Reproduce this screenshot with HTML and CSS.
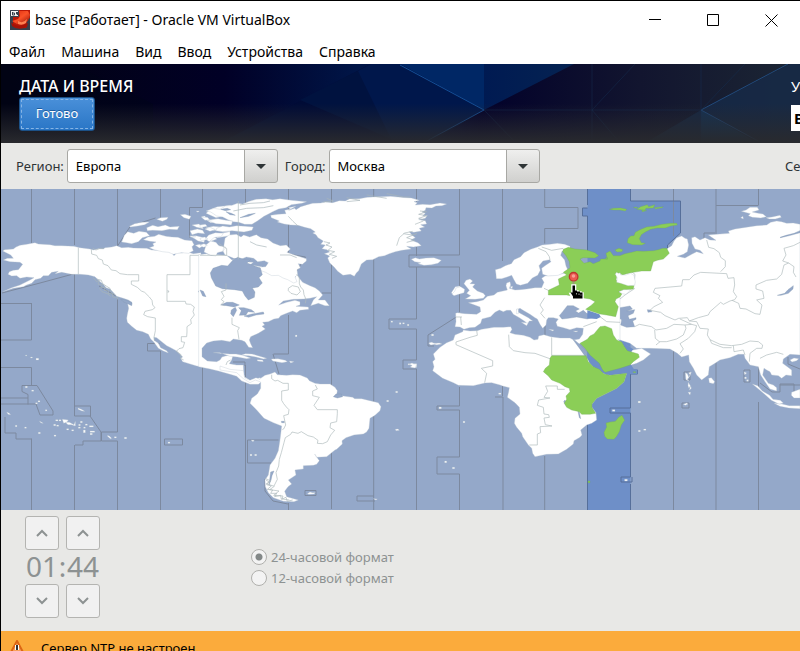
FILE: index.html
```html
<!DOCTYPE html>
<html lang="ru">
<head>
<meta charset="utf-8">
<title>base [Работает] - Oracle VM VirtualBox</title>
<link rel="stylesheet" href="styles.css">
</head>
<body>
<div class="window">
  <header class="titlebar">
    <svg class="app-icon" viewBox="0 0 20 20" aria-hidden="true">
      <defs>
        <linearGradient id="ball" x1="0" y1="0" x2="1" y2="1"><stop offset="0" stop-color="#d92b0c"/><stop offset=".5" stop-color="#fa5228"/><stop offset="1" stop-color="#961004"/></linearGradient>
      </defs>
      <path fill="#b81707" d="M0 0h20v20H0z"/>
      <path fill="#37404c" d="M0 0h3v16l6 2h11v2H0zM17 10l3-2v11h-4z"/>
      <path fill="url(#ball)" d="M9 1h9l2 4-2 6-4 3H7L2 11l6-2 2-3z"/>
      <path fill="#ff8152" d="M8 11q5 3 9-2l-1 4q-4 3-8 1z"/>
      <path fill="#a51206" d="M1 12q7 7 17 1l-1 4q-9 4-15-1z"/>
      <path fill="#f5f5f5" stroke="#39414e" d="M.5.5h8v6h-8z"/>
      <path stroke="#39414e" d="M2.500 2v3h2v-2h-2M6.500 2v2h1v-2v3" fill="none"/>
    </svg>
    <h1 class="caption">base [Работает] - Oracle VM VirtualBox</h1>
    <div class="controls">
      <button class="control" aria-label="Свернуть"><svg viewBox="0 0 13 13"><path d="M0 5.500h12"/></svg></button>
      <button class="control" aria-label="Развернуть"><svg viewBox="0 0 13 13"><path d="M.5.5h11v11H.5z"/></svg></button>
      <button class="control" aria-label="Закрыть"><svg viewBox="0 0 13 13"><path d="M.5.5l12 12M12.500.5l-12 12"/></svg></button>
    </div>
  </header>
  <nav class="menubar">
    <a href="#">Файл</a><a href="#">Машина</a><a href="#">Вид</a><a href="#">Ввод</a><a href="#">Устройства</a><a href="#">Справка</a>
  </nav>
  <main class="screen">
    <section class="banner">
      <svg class="banner-art" viewBox="1 64 799 79" preserveAspectRatio="none" aria-hidden="true">
        <defs>
          <linearGradient id="night"><stop offset="0" stop-color="#020310"/><stop offset=".28" stop-color="#010026"/><stop offset=".45" stop-color="#001648"/><stop offset=".6" stop-color="#02012a"/><stop offset=".8" stop-color="#12152f"/><stop offset="1" stop-color="#1c2634"/></linearGradient>
          <linearGradient id="fade" x2="0" y2="1"><stop offset=".5" stop-color="#292a2e" stop-opacity="0"/><stop offset="1" stop-color="#292a2e"/></linearGradient>
          <linearGradient id="facet"><stop offset="0" stop-color="#001a52"/><stop offset="1" stop-color="#052352"/></linearGradient>
        </defs>
        <path fill="url(#night)" d="M1 64h799v79H1z"/>
        <path fill="#000317" d="M1 64l72 0 80 40v39H1z" opacity=".5"/>
        <path fill="#000b36" d="M371 64L220 143h210l54-33-84-46z"/>
        <path fill="#00123f" d="M371 64L300 100l100 43h22l62-33-84-46z"/>
        <path fill="#00174b" d="M371 64l-13 7 35 72h29l62-33-84-46z"/>
        <path fill="#002765" d="M400 64h84v46z"/>
        <path fill="url(#facet)" d="M484 64h90l-90 46z"/>
        <path fill="#172a49" d="M790 64h10v79H645l56-33z" opacity=".8"/>
        <path fill="#153a61" d="M701 110v33h57z" opacity=".6"/>
        <g fill="none" stroke="#144e96">
          <path d="M400 65l84 45-61 33"/>
          <path d="M788 64l-87 46 57 31" stroke="#214a7c"/>
          <path d="M592 64v79M635 64l-43 46 28 33M701 64v79M745 64l-44 46M484 110h217M484 110l32 33" stroke="#173054" opacity=".45"/>
        </g>
        <path fill="url(#fade)" d="M1 64h799v79H1z"/>
      </svg>
      <div class="banner-main">
        <h2 class="banner-title">ДАТА И ВРЕМЯ</h2>
        <button class="done"><span>Готово</span></button>
      </div>
      <div class="banner-side"><span>У</span><b class="layout">В</b></div>
    </section>

    <form class="location">
      <label for="region">Регион:</label>
      <span class="combo"><select id="region"><option>Европа</option></select><svg class="arrow" viewBox="0 0 10 5"><path d="M0 0h10L5 5z"/></svg></span>
      <label for="city">Город:</label>
      <span class="combo"><select id="city"><option>Москва</option></select><svg class="arrow" viewBox="0 0 10 5"><path d="M0 0h10L5 5z"/></svg></span>
      <span class="network">Се</span>
    </form>

    <svg class="map" viewBox="1 189 799 321" role="img" aria-label="Карта часовых поясов">
      <path class="sea" d="M1 189h799v321H1z"/>
      <!-- selected zone -->
      <path class="zone" d="M587.500 189h43v12h50v32l-13 12v8l-37 60v197h-43V216h-5v-8h5z"/>
      <!-- zone limits -->
      <g class="limit">
        <path d="M31.500 189v54M31.500 303v37H1M1 303.500h30.500M1 367.500h30.500v18M31.500 438.500V510M1 398h27M1 404h36M74.500 189v56M74.500 274v142M74.500 445v65M117.500 189v57l13-20 25-8M117.500 299v133h-16v9h16v69M101 432v9h-18v4h-8M101 432l-11-16M74.500 406h16v10h-16M160.500 189v29M160.500 351v159M147.500 343.500h12M147.500 343.500v7.500h13M202.500 189v18.500h-13v30M202.500 365v145M245.500 189v20M245.500 365v145M288.500 189v65l17 3-9 14v19M288.500 315v39h-15M288.500 503v7M331.500 189v320M373.700 189v321M416.500 189v13M416.500 247v9M416.500 267v52H389v10h27.500v31H403v9h13.500v141"/>
        <path d="M459.500 189v66H409v12h50.500v50M459.500 387v19H437v4h22.500v47H437v17h22.500v36M459.500 315L428 335v11h6M502.500 189v72M502.500 386v10M495 397h8v113M544.700 189v18.500H578v21h-33.300v15M544.700 456v54M545 324v13M673.500 189v47M673.500 349v161M716 189v45M716 360v150M716 205.500h42.500M758.500 189v16M758.500 366v23M758.500 402v108M704 240v-7h11"/>
        <path d="M5 417v16h11v6h15.500M37 385.500H22v6l6 3v10M37 385.500l16 25.500v4H40l-4-11M164.500 439h18v6h-18zM247.500 440h31M247.500 440v23H271M305 490.500h11v5h-11zM374 496h-17v5h18M2 293l38-10 37-10M684 372h6v8h-6zM682 403h7v5h-7zM744 370h6v12h-6zM760 383l12 9h8v-8h14v10h6M788 357v7l12 5M780 385h20M273 354l6 20M245 366v-4h-12M322 293h9M99 286l17 10M265 479v12l8 10 15 3"/>
        <path class="edge" d="M587.500 189v16M587.500 208h-5v8h5v36M587.500 416v94M630.500 189v12h50v32l-13 12v8M630.500 372v36H610v5h20.500v64H621v5h11v-5M630.500 484v26M630.500 370h7v4h-7"/>
      </g>

      <!-- western North America -->
      <g class="land" transform="translate(0 185) scale(.33333)">
        <path d="M8 198L14 194 40 192 48 186 60 181 80 178 105 173 115 177 150 179 165 182 185 182 222 184 240 188 270 192 280 195 295 191 310 192 315 188 335 186 350 182 365 188 385 187 400 189 440 190 455 195 470 196 490 195 500 199 515 202 522 212 530 203 545 204 560 200 580 206 603 203V545L590 543 570 537 548 530 542 520 548 516 530 498 512 488 500 482 485 470 470 458 462 457 462 466 475 475 482 488 500 497 505 504 490 498 475 490 462 472 452 462 445 448 428 440 410 436 395 424 382 412 380 400 382 388 386 370 382 352 395 360 396 352 385 345 370 340 350 334 338 320 330 312 318 308 310 298 300 290 285 275 265 270 240 268 215 268 200 265 185 262 165 266 175 259 155 262 145 272 130 272 122 280 105 284 95 295 80 300 70 305 40 310 8 320 35 308 60 300 90 285 102 278 80 276 60 280 50 272 35 273 24 268 28 260 40 256 55 254 60 248 68 238 60 232 30 230 10 225 22 220 40 220 32 210 20 204z"/>
        <path d="M365 171l8-20 10-11 18 5 16-6 22 3 10 10-22 6-12 12-20 6-16-3zM430 164l14-8 20-2 12-6 22 6 18 2 18 1 20 8 22 2 6 12-6 6 4 12-14 8-22-2-24 5-14-6-20-2-24-6-14-6 14-5-4-7 10-5-18-2zM388 124l16-8 22-4 22-1-14 8-20 4-22 3zM440 128l18-7 16 4 22-5 14 6 28-2-6 10-24-1-22 4-28-1-16 1zM470 103l12-5 22-1-3 6-14 6zM541 89l14-1 18 6-5 9-16-5zM576 120l20-3 10 6 4 8-20-4zM570 137l22-5 16 4 6 10-20-2-18 5zM568 153l20-1 28 7-4 13-18-4-10-7zM618 85l14-12 20-8 40-4v28l-20 4-24 5-10-4zM620 106l30-5 14 7-32 5zM618 128l22-4 50 4v12l-50-4zM617 160l26-4 8 6-18 7zM640 148l50-8v12l-38 6zM618 180l22-10 20 14 22 2-10 12-16 2-14 12-18-4 4-12zM586 181l12-3 12 5-12 6zM604 95l10-2 5 5-11 1zM574 157l10-4 3 3zM588 78l10 0-4 4z"/>
        <path class="water" d="M594 320l8-7 9 8 3 10 6 8-9-4-7-10zM362 342l18 4 16 8-1 8-12-6-14-6z"/>
        <path class="coast" d="M280 278l10 12 8-4-4 12 14 0-6 10 14-2-4 10 14 2-2 8 14 0 0 10 16 2-2 6M290 282l14 4 4 10 12 8 10 6 4 12 12 8M298 310l8 10 16 6 10 8"/>
        <path class="border" d="M235 188v80M274 193l1 14 15 4 5 10 12 4 3 12 14 5 10 13 14 2 12 9 22 3h34v19h-22v10l18 9 12 11 10 4 14 14 8 10 2 14 7 8-8 6-22 5-4 10 12 6 23 4v38l-4 20 2 10M600 211h-30v58h-69v80h55l2 8 14 1 11 8-4 14 4 10-11 14 2 12-13 9v16l-1 14-16 0v15l10 2-5 16-12 3-8 8 14 10-1 11 9 5M503 315l4 6h-5M278 190l10 5 12-5 12 0"/>
      </g>

      <!-- eastern North America, Arctic islands, Greenland -->
      <g class="land" transform="translate(200 185) scale(.33333)">
        <path d="M-4 209L20 206 36 212 50 209 80 211 96 225 118 218 130 230 160 232 150 240 185 245 190 250 205 250 228 258 255 270 285 278 290 265 298 280 308 292 330 302 345 308 358 318 368 330 355 345 375 345 388 362 375 362 355 355 332 362 340 345 350 335 330 340 310 342 280 343 250 348 236 360 260 352 285 346 300 350 300 360 288 364 325 366 326 373 300 376 290 383 278 378 262 384 242 392 236 400 222 402 205 410 188 412 194 420 186 424 196 432 175 445 152 455 148 465 152 476 158 488 146 487 135 470 125 466 100 462 90 470 65 466 40 468 20 474 6 490 6 515 22 528 50 530 60 525 66 516 76 513 100 508 95 525 88 536 110 540 130 540 131 560 133 575 150 586 180 578 192 585 175 598 150 598 125 588 110 574 90 568 55 558 30 552-4 545z"/>
        <path d="M50 130l18-7 20 3 22-4 26 2 24 2-4 10-24 5-36-4-28 3-20-3zM75 160l12-10 22-2 14 8 8-6 18 6 20-7 14 9 20 4 16 12 22 8 18-2 12 12-10 10 16 6 16 5 26 8 0 7-12 10-12-2 6 12-10 6 2 14-8 8 6 14-10 4-18-10-14-5-14-8-20 1-18-10-14-5-6-10 20-2 8-12-12-6-20 3-12-10-22-4-14 6-24-2-14-6-12-4-6-12zM18 78l24-8 18 3 16-10 20-2 16-6 16 2 20-8 20-6 30-2 20 3 22-3 34 5 46 4-14 5-32 4-16 9-22 4-18 8-14 8-12 6-20 14-16 10-22 0-18-6-16-2-16-6-16-8-18-3-10-7-8-5zM4 97l18 0 8 7-15 2zM24 107l30-6 24 5 20 2-4 12-20-2-26-2zM14 132l16-5 16 7-16 5zM0 120l16-2 6 6-22 4zM26 150l20-7 24 2-6 9-22 4-14 12-12-8zM18 180l14-12 16 4 8 10 22 5-10 12-16 4-4 10-16-2-20-10zM0 180l12-4 10 5-12 6zM0 160l14-4 10 6-20 6z"/>
        <path d="M266 76l18-6 4 4 14-9 20-6 16-4 24-1 14-3 22 2 20-6 18 1 12-6 30-1 24-4 36-2 34-1 30 3 32 2 24 7-16 4 10 3-6 7 22-2 22 1 30-5 20 3-14 5-18 1-12 6-18-1-2 8-10 5 10 4-8 8 14-2-6 9-20 4 20 3 4 10-18 2 12 7-16 4 6 8-22 4-14-2 8 10 10 8-14 7 22 8 10 9-24 4-20-2 14 8-28 4-20 4-18 6-14 6-18 3-18 9-18 1-16 12-8 20-7 7-6 10-12-6-22 3-16-12-10-12-14-14-6-14 6-6-16-7 16-5-8-7-15-3 10-11-14-2 8-10-16-10-6-9-10-5 8-3-14-10-18-4-20-6-22-1-20-3-20-6 6-3-24-10-2-7 22-3 24-2-4-10 18-4-8-4 24-4z"/>
        <path d="M634 223l12-5 12 4 20-3 24-1 22 8-10 9-20 4-22 2-18-5 8-3-18-3zM122 511l14-5 20 1 18 5 26 8-10 2-22-6-22-4zM172 524l16 1 2 5-18-2zM218 528l-4-6 20-1 22 5 6 4-16 3zM268 528l14 2-10 4zM286 450h5v5h-5zM148 245l10 0 2 6-12-2zM128 245l12-2-4 6zM573 408h5v4h-5zM598 413h5v5h-5zM608 413h5v4h-5zM622 418h5v4h-5zM694 448h5v4h-5zM688 474l10-1-2 6zM702 475l16-1 8 3-18 3zM624 536h5v4h-5zM630 543h20v4h-12zM640 536h10v8h-6zM756 320l10-15 14-2v22l-18 5-8-6zM770 395l10-13v30z"/>
        <path class="water" d="M34 278l-3-14 8-14 26-9 18 2 16-18 14-8 18 6 22-1-12 12 18 7 22 8 6 20-10 9 10 16-12 12-18 3 8 12-2 16-18 8-10-12-8-15-24-4-36-3-20-8zM62 360l18-8 18 0 20 8-16 6-22-4zM94 375l12-8 4 9-6 12-4 7-8-9zM116 368l16 0 22 6 10 8-20-2-6 10-20 1 6-14zM132 393l24-6 34-6 2 6-24 3-22 7zM0 315l10 4 8 16-10-2zM62 73l20-3 10 4-16 3zM78 80l16 5 12 6-16-2zM120 98l26-4 20-9-20 3z"/>
        <path class="border" d="M115 48v175M78 295l0 20-14 5 8 14-8 10 8 6-8 8 10 4M0 211h80v-20l-24-16M96 398v20l22 10-5 9 4 26M290 268l8 10 0 18 4 10 8 9 2 14 6 14-2 12M265 310l12-8 18 4 6 14-10 10-18-5-8-8zM590 182l8-24 16-14 24-5M645 118l25-10M265 94l14 15 15 14M78 540l4-10 10-5"/>
        <path class="coast" d="M120 60l30-5 40-2 20-5M100 78l40-8 50-2 30-6M150 170l20 10 30 6M240 210l30 0 20 8M380 40l20 8-30 3M440 38l40 8-40 4M500 30l60 10M560 26l50 10 20 0M660 78l20 2-24 8 24 4-24 8 20 6M610 146l26 4 14-4-30 12 24 8-24 6M372 170l18 4-12 6 18 6-12 10 20 4-16 8 22 6-14 6"/>
      </g>

      <!-- South America -->
      <g class="land" transform="translate(220 350) scale(.33333)">
        <path d="M0 60V48L30 58 70 62 74 84 90 91 108 83 120 88 122 85 135 76 150 72 165 66 172 74 200 76 218 74 240 75 262 84 268 92 285 100 300 102 330 102 345 112 352 122 350 134 370 138 398 142 404 146 425 146 450 152 475 158 483 170 480 182 465 196 450 205 447 235 440 246 430 252 402 255 378 263 366 272 367 282 350 298 345 300 320 320 290 322 284 312 298 332 290 343 280 346 250 347 250 357 225 360 228 375 210 387 205 390 215 402 204 410 194 424 200 440 235 450 222 455 190 454 160 443 145 428 136 410 135 390 145 375 150 345 165 325 175 302 180 270 185 228 160 218 132 205 110 180 90 160 95 145 112 132 122 115 122 96 106 90 90 98 70 86 50 68z"/>
        <path d="M0 8l-20 0 50 4 18 0 20 4 24 8-12 2-28-5-22-2zM527 124h6v4h-6zM500 151h6v4h-6zM526 238l8-1 4 4-10 1zM90 313h6v4h-6zM104 313h6v4h-6zM93 270l10 1-4 4zM262 431l8-5 8 2 8 0-4 4-16 1zM566 43l10-4 6 3 8 0-4 12-14-2 4-6zM460 446l12 1-4 3z"/>
        <path class="water" d="M340 140l8-8 16 0 4 8-16 4zM184 214h9v4h-8zM152 366l10-3-6 14-3 14-6 14z"/>
        <path class="coast" d="M138 390l10 6-8 8 14 4-12 10 16 2-6 10 18 0-6 10 18-4 2 12 14-6 4 12 16-4"/>
        <path class="border" d="M155 74l0 12 10 7 8-2 16 9h16v20l-20 3v28l6 10 8 10 8 8-2 14-14 4 6 28-6 12-4 2M192 278l4-15 16-10 4-7 18 4 10-5 20 12 16 4 14 10-2 9 16 1 14-6 10-20 12-14-14-8 2-14 18-4 2-24 0-12h-60l-10-13 16-24-20-5 0-14 14-6-6-12M192 278l-8 30-6 20-2 20-8 20 4 20-10 20M135 385l18 8-14 8 24 8-14 10 28 4-16 13 28 2-3 9 22 3"/>
      </g>

      <!-- Pacific islands -->
      <g class="land" transform="translate(0 360) scale(.33333)">
        <path d="M20 156l8 4 4 4-8-1zM46 196h5v4h-5zM74 201h5v4h-5zM76 79h6v4h-6zM95 90h6v4h-6zM114 122h6v4h-6zM107 128h5v4h-5zM136 149h5v4h-5zM118 183l12 7-7-1zM115 217h6v4h-6zM162 225h6v4h-6zM161 193h6v4h-6zM170 195h6v4h-6zM167 179h7v4h-7zM177 179h6v4h-6zM187 178l18 2-4 6-10 4zM196 187l12 0 14 7 4-10v14l-12-4-10 0zM200 206h6v4h-6zM215 209h6v4h-6zM235 201h6v4h-6zM241 184h6v4h-6zM236 193h5v4h-5zM251 201h5v4h-5zM250 210h6v8h-6zM256 192h6v4h-6zM268 197h12v4h-12zM270 213h14v4h-14zM270 220h7v4h-7zM234 144l10 4 10 6-8-1-12-5zM321 227l10 9 4-1-8-8zM343 230h6v4h-6zM373 232h7v4h-7zM504 246h6v4h-6zM108-5h8v5h-8zM92-9h5v3h-5zM77-15h3v3h-3z"/>
      </g>

      <!-- Asia -->
      <g class="land" transform="translate(600 185) scale(.33333)">
        <path d="M0 235L202 205 200 192 215 182 222 168 230 158 245 153 255 160 262 162 266 180 262 200 250 208 232 214 255 219 275 208 290 200 310 206 300 196 285 192 276 175 275 158 285 155 300 165 315 158 330 165 348 166 325 150 350 148 388 145 385 138 405 132 430 128 470 122 500 120 512 112 530 108 545 110 560 115 580 114 600 118V510L570 508 550 522 548 535 562 545 575 555 575 572 558 570 545 580 535 572 515 570 510 560 500 555 492 550 488 570 505 595 520 600 530 608 530 618 510 612 495 590 482 570 475 545 450 540 435 520 432 508 415 508 390 518 360 525 345 535 328 545 325 570 305 585 290 570 280 550 268 530 266 510 245 516 232 505 210 492 150 490 110 490 90 475 60 465 40 450 0 430z"/>
        <path d="M424 79l14-4 12-8 22 0 5 8-20 6 18 4 14 2 10 8-16 4-26-2-12-5 6-6zM498 98l18-2 24-5 4 6-18 5-18 0zM326 580l8-2 10 12-4 6-12-3zM457 597l16 5 14 16 22 13 10 12 22 3 9 8-12 4-24-12-20-18-16-14zM522 655l24 2 22 5 32 0v9l-34-2-26-5zM575 622l18-7 7-2v26l-18 0-8-8zM570 525l12-6 14 2-6 6-14 4zM256 563l6 3 4 10 4-6-4-7 8-2-4 12-8 10 6 6-10-5zM265 592l6 10-4 8-3-8zM272 602l2 8-6 6zM264 622l8 0-2 8zM250 658l10-4 4 3-8 4zM432 560l8 4-6 5zM434 576h5v5h-5zM440 584h5v5h-5zM114 649h7v4h-7zM422 98l7-4 1 8z"/>
        <path class="water" d="M540 157l18-6 24-6 18-8v6l-28 8-30 7zM532 331l22-6 10-11 16-12-1 10-14 13-22 6zM46 375L60 368 90 363 97 372 80 378 104 374 100 385 84 392 88 403 108 398 108 403 98 408 104 425 80 427 62 420 65 405 50 392zM142 374l10 1 4 5-12 2z"/>
        <path class="border" d="M92 258L105 268 102 300M105 310L75 330 60 342M165 310L245 303 248 284 268 284 282 270 302 262 380 266 384 280 402 278 404 300 400 320 410 335 404 344 390 348 370 358 362 352 330 380 325 390 295 398 268 408 262 398 236 400 225 405 195 392 182 382 150 376 162 365 188 352 175 340 180 332 160 322zM104 425L118 418 155 425 168 435 200 430 222 418 255 420 275 418 240 402M164 435L166 460 178 470 200 470 230 462 250 450 258 430 255 420M275 418L290 422 284 440 265 460 240 476 250 492 240 505M396 346L416 355 420 370 438 372 465 386 480 388 486 360 470 345 492 340 488 318 468 312 468 300 500 286 530 282 545 268 552 240 566 234 582 245 580 262 588 276M566 234L548 228 558 210 552 190 580 182 600 172M320 165L326 187 342 191 358 203 362 217 376 227 376 245 362 260M268 408L290 410 300 430 325 432 322 450 330 464 360 478 395 482 425 478 450 468 475 470 488 480 486 490 470 490M330 464L335 475 370 488 395 488M400 482L402 500 430 495 435 510M470 490L450 505 448 530M480 520L500 510 530 502 550 508M0 398L40 405 60 420M168 480L180 470M20 410L30 440"/>
      </g>

      <!-- Europe -->
      <g class="land" transform="translate(420 185) scale(.33333)">
        <path d="M107 385L112 383 135 386 170 388 182 380 180 366 170 362 158 358 145 353 170 350 190 345 202 334 222 330 232 322 262 315 258 302 260 294 270 290 272 300 268 310 285 315 300 314 320 312 345 308 365 308 372 292 365 280 375 273 415 268 450 262 480 240 600 240 600 470 540 470 500 470 480 476 465 478 460 465 478 462 488 448 490 430 470 428 450 434 430 428 412 424 408 412 415 402 400 398 385 398 380 405 378 420 368 430 360 418 352 402 345 398 330 388 308 375 300 370 290 374 295 382 310 390 325 398 338 408 328 408 322 418 316 410 298 398 280 388 272 376 260 376 250 380 238 375 225 382 212 395 186 402 182 415 165 427 148 428 132 433 120 426 105 425 108 410z"/>
        <path d="M228 268l-2-14 16-4 14-8 18-6 8-12 20-9 10-12 20-10 20-7 14-6 24-2 22-3 22 3 16 6 0 9-24 6-4 12 12 14 4 18 6 13-12 7-18 8-30 2-16-5-3-18 10-8 18-12-4-6-20 4-12 14 4 14-8 15-16 8-14 16-22 6-12-4-8-14-6-12-16 6-14 4-16 0z"/>
        <path d="M96 327l8-8 4-10 14-4 12 8-2 10-16 5-14 4zM136 342L152 332 140 325 148 316 140 306 132 296 138 286 150 282 158 288 150 296 165 297 158 306 172 318 190 325 196 332 190 340 165 343zM290 372h5v14h-6zM304 412l20 2-4 8zM386 433l16 2-4 3zM460 438l14 0-6 3zM270 305l8-1-2 8z"/>
        <path class="border" d="M122 396L124 420M108 396h18M374 338L360 360 370 375 362 385 375 400M385 316L372 310M355 190L378 200 388 215 390 225M365 186L395 196 430 190M540 395L560 410 600 412M490 425L530 410"/>
        <path class="water" d="M418 392L428 380 442 362 460 362 478 372 466 378 476 384 490 376 500 385 510 388 516 398 502 402 470 396 445 400 426 402z"/>
        <path class="band" d="M502 376L520 382 538 388 542 396 530 402 502 400z"/>
      </g>

      <!-- Africa -->
      <g class="land" transform="translate(420 320) scale(.33333)">
        <path d="M130 30L150 33 172 32 185 28 222 22 250 22 272 20 276 28 270 38 285 43 310 46 330 52 342 60 354 58 356 48 372 44 392 50 420 54 450 54 465 62 480 85 500 112 520 140 540 155 560 165 620 160 612 185 590 205 560 220 530 235 516 252 516 262 528 278 530 300 515 310 500 315 482 330 486 345 480 352 462 362 460 372 440 388 415 402 380 403 345 410 338 400 335 385 325 375 308 350 305 340 290 322 283 310 285 295 300 282 298 262 285 248 262 232 266 215 268 203 248 198 240 195 215 188 195 189 160 197 115 196 100 188 68 175 38 152 42 140 38 125 45 118 40 102 60 82 80 68 100 60 105 45 128 35z"/>
        <path d="M640 90L665 85 692 102 670 120 650 130 630 136 600 60z"/>
        <path class="border" d="M170 30L172 46 150 52 108 66V74L218 122V138L184 145 200 160 194 188M266 44L268 80 280 92 315 98 345 100 395 118M395 52v54h100M377 198h35v10h22M377 198L383 214 372 232 390 234 356 240 352 256 370 262 372 282 386 284 388 292 372 294 376 314 396 318 360 320 362 338 352 342V375H328"/>
        <path d="M57 261h7v5h-7zM129 304h6v4h-6zM74 423h6v5h-6zM97 442h7v4h-7zM236 219h7v4h-7zM655 244h6v4h-6zM655 331h6v4h-6zM671 327h7v4h-7zM577 269h8v5h-8zM614 478h8v5h-8zM36 43h5v4h-5zM26 69l8-2 16 5-18 3z"/>
        <path class="water" d="M431 245l4-5 6 16-4-1zM474 274l4 2 4 20-4-3zM460 60L466 62 480 74 502 96V118L480 87z"/>
        <path class="band" d="M502 94L515 108 545 140 553 160 538 150 520 140 508 128 502 112zM592 57L612 66 626 78 640 88 632 98 620 95 604 66zM552 158L632 133 642 148 652 148V163H632L620 160 570 166z"/>
      </g>

      <!-- territory in the selected zone -->
      <g class="green" transform="translate(420 185) scale(.33333)">
        <path d="M430 193L445 187 465 192 500 195 525 203 536 212 525 219 490 218 480 222 492 235 510 230 520 236 540 228 542 222 562 222 558 205 570 198 580 212 600 212 615 206 635 202 650 198 670 199 700 197 715 194 728 190 740 190 748 205 730 222 712 226 700 230 692 258 665 258 640 262 620 266 608 270 598 264 586 266 590 274 588 286 602 290 615 295 630 300 642 302 640 312 620 315 596 320 606 326 600 336 588 342 585 350 595 365 590 385 587 395 560 390 540 387 497 373 515 360 525 350 510 342 470 336 440 330 385 330 385 316 418 300 415 282 440 270 430 262 450 248 448 230 438 212 428 200z"/>
        <path d="M624 161l8-8 10-1 4-10 14-8 20-8 22-2 24-6 26-3 18 0 2 5-20 3-16 6-24 0-20 4-16 8-12 8-6 12 6 12 12 2-10 5-28-1-16-6zM568 73l12-3 22-1 18 4-4 5-16-3-18 0zM640 67l14 0-6 3zM662 65l20-6 4 6 18-6-4 10-22 1-4 6-24-3zM666 75l14 2-14 3zM704 68l26-3-4 3-20 4zM585 195l12-5 12 4-4 6-14 1zM557 218h5v4h-5z"/>
        <path d="M606 691l8 15-10 14-6 20-8 14-8 9-20-1-8-8-2-12 8-16-2-12 12-3 16-2 10-12zM504 888h6v5h-6zM640 560h7v3h-7z"/>
      </g>
      <g class="green" transform="translate(420 320) scale(.33333)">
        <path d="M395 107L498 107 505 125 520 140 538 148 552 162 570 166 620 160 612 185 590 205 560 220 530 235 516 252 516 262 527 280 510 283 485 283 478 275 455 270 440 262 433 250 440 238 438 228 450 215 448 205 435 200 420 190 395 180 385 168 370 155 376 145 388 135 390 115zM480 70L502 58 510 48 522 42 530 32 540 20 555 18 575 26 580 45 590 60 605 66 612 78 622 92 655 102 658 112 640 125 630 135 600 145 555 157 548 150 538 130 510 105 495 85z"/>
      </g>
      <g class="land" transform="translate(600 185) scale(.33333)">
        <path d="M46 268l4-6 6 4 4-3 2 7 16 0 14-5 10 6 4 20-2 10-20 1-22-7-12-3 2-14zM57 320l14-6 20 0-2 4-12 10-10-2z"/>
      </g>

      <!-- chosen city -->
      <circle cx="573.600" cy="276.800" r="4.300" fill="#ec5b51" stroke="#bd3730" stroke-width="1.300"/>
      <circle cx="573.500" cy="276" r="1.800" fill="#f99e96"/>
      <path d="M573.500 281.500v5" stroke="#9b9b79" stroke-width="2"/>
      <path d="M573 286h1.500v6h2.500v1h3v1h2v4.500h-8.500l-2-4h1.500z" fill="#000" stroke="#fff" stroke-width="3.500"/>
      <path d="M572.500 285.500h2.500v5h2v1h3v1h2.500v6h-9.500v-2l-2.500-4h2z"/>
      <path d="M576.500 293v1.500M579 293.500v1.500M581 294.500v1" stroke="#fff" stroke-width=".6"/>
    </svg>

    <section class="time">
      <div class="clock">
        <button disabled aria-label="Час вперёд"><svg viewBox="0 0 12 8"><path d="M1 7l5-5 5 5"/></svg></button>
        <i></i>
        <button disabled aria-label="Минута вперёд"><svg viewBox="0 0 12 8"><path d="M1 7l5-5 5 5"/></svg></button>
        <span class="num">01</span><span class="num">:</span><span class="num">44</span>
        <button disabled aria-label="Час назад"><svg viewBox="0 0 12 8"><path d="M1 1l5 5 5-5"/></svg></button>
        <i></i>
        <button disabled aria-label="Минута назад"><svg viewBox="0 0 12 8"><path d="M1 1l5 5 5-5"/></svg></button>
      </div>
      <div class="formats">
        <label><input type="radio" name="format" checked disabled>24-часовой формат</label>
        <label><input type="radio" name="format" disabled>12-часовой формат</label>
      </div>
    </section>

    <footer class="notice">
      <svg viewBox="0 0 16 16" aria-hidden="true"><path d="M8 1l7 13H1z" fill="#f47a22" stroke="#dc6614" stroke-width="2" stroke-linejoin="round"/><path d="M8 3l5.500 10.500h-11z" fill="#f8a25c"/><path d="M8 5v5M8 11v2" stroke="#fff" stroke-width="4"/><path d="M8 5v5M8 11v2" stroke="#333" stroke-width="2"/></svg>
      <span>Сервер NTP не настроен.</span>
    </footer>
  </main>
</div>
</body>
</html>
```
FILE: styles.css
```css
* { box-sizing: border-box; }

body {
  margin: 0;
  overflow: hidden;
  background: #fff;
  font: 13px/20px "Noto Sans", "Open Sans", sans-serif;
  color: #2e3436;
}

button, select, input { font: inherit; margin: 0; }

.window {
  display: flex;
  flex-direction: column;
  height: 100vh;
  overflow: hidden;
  border: solid #000;
  border-width: 1px 0 0 1px;
}

.titlebar {
  display: flex;
  align-items: center;
  flex: none;
  height: 38px;
  padding-left: 9px;
  color: #000;
}

.app-icon { width: 20px; height: 20px; margin-right: 5px; }
.caption { margin: 0; font-size: 14px; font-weight: 400; }
.controls { display: flex; margin-left: auto; }

.control {
  display: flex;
  align-items: center;
  justify-content: center;
  width: 58px;
  height: 36px;
  padding: 0;
  border: 0;
  background: none;
}

.control svg { width: 13px; height: 13px; fill: none; stroke: #000; }

.menubar {
  display: flex;
  flex: none;
  gap: 16px;
  height: 25px;
  padding-left: 8px;
  font-size: 14px;
  line-height: 26px;
}

.menubar a { color: #000; text-decoration: none; }

.screen {
  display: flex;
  flex-direction: column;
  flex: 1;
  min-height: 0;
  overflow: hidden;
  background: #e8e8e6;
}

.banner {
  position: relative;
  display: flex;
  justify-content: space-between;
  flex: none;
  height: 79px;
  padding: 12px 0 0 18px;
  overflow: hidden;
  color: #fff;
}

.banner-art { position: absolute; inset: 0; width: 100%; height: 100%; }
.banner-main, .banner-side { position: relative; }
.banner-title { margin: 0; font-size: 16px; font-weight: 500; line-height: 21px; }

.done {
  display: block;
  width: 76px;
  height: 34px;
  padding: 1px;
  border: 1px solid #1c5187;
  border-radius: 3px;
  background: linear-gradient(#4a90d9, #2a76c6);
  color: #fff;
  text-shadow: 0 -1px #1f5c9e;
}

.done span { display: block; padding-bottom: 2px; border: 1px dashed #86b4e4; line-height: 26px; }

.banner-side { display: flex; flex-direction: column; width: 9px; font-size: 15px; }
.layout { width: 9px; height: 26px; margin-top: 9px; padding-left: 3px; overflow: hidden; background: #fff; color: #000; line-height: 26px; }

.location {
  display: flex;
  align-items: center;
  flex: none;
  height: 46px;
  padding-left: 15px;
}

.location label { margin-right: 3px; }
.network { width: 15px; margin-left: auto; }
.combo { position: relative; width: 211px; height: 34px; margin-right: 7px; }

.combo select {
  width: 100%;
  height: 34px;
  padding: 0 40px 0 8px;
  appearance: none;
  border: 1px solid #a8a8a4;
  border-radius: 3px;
  background: linear-gradient(#a8a8a4, #a8a8a4) right 32px top / 1px 100% no-repeat,
    linear-gradient(#efefee, #d0d0ce) right / 32px 100% no-repeat, #fff;
  color: #000;
}

.arrow { position: absolute; right: 12px; top: 15px; width: 10px; height: 5px; fill: #2e3436; pointer-events: none; }

.map { display: block; flex: none; width: 100%; height: auto; }
.sea { fill: #94a8c9; }
.zone { fill: #6e8fc8; }
.limit { fill: none; stroke: #7c899f; stroke-width: 1; }
.limit .edge { stroke: #566f9a; }
.land { fill: #fff; stroke: #b5c2cd; stroke-width: 1; }
.land .water { fill: #94a8c9; stroke: #8398b0; }
.land .band { fill: #6e8fc8; stroke: none; }
.land .border { fill: none; stroke: #aebabb; stroke-width: 2; }
.land .coast { fill: none; stroke: #a7b5ba; stroke-width: 2; }
.green { fill: #8bce57; stroke: #6fa95e; stroke-width: 1; }

.time {
  display: flex;
  align-items: center;
  flex: none;
  height: 121px;
  padding-left: 24px;
  color: #8d9292;
}

.clock { display: grid; grid-template-columns: 34px 7px 34px; grid-template-rows: 34px 34px 34px; align-items: center; justify-items: center; width: 75px; margin-bottom: 7px; }

.clock button {
  display: flex;
  align-items: center;
  justify-content: center;
  width: 34px;
  height: 34px;
  padding: 0;
  border: 1px solid #b4b4b1;
  border-radius: 3px;
  background: #f1f1f1;
}

.clock svg { width: 12px; height: 8px; fill: none; stroke: #8d9292; stroke-width: 2; }
.num { font-size: 28px; line-height: 32px; height: 34px; }

.formats { display: flex; flex-direction: column; gap: 1px; margin: 0 0 6px 151px; }
.formats label { display: flex; align-items: center; gap: 4px; }

.formats input {
  width: 16px;
  height: 16px;
  appearance: none;
  border: 1px solid #b0b0ad;
  border-radius: 50%;
  background: #f3f3f3;
}

.formats input:checked { background: radial-gradient(circle, #838888 3px, #f3f3f3 4px); }

.notice {
  display: flex;
  align-items: center;
  flex: none;
  gap: 16px;
  height: 34px;
  padding-left: 8px;
  background: #fbab3c;
  color: #000;
}

.notice svg { width: 16px; height: 16px; }
```
